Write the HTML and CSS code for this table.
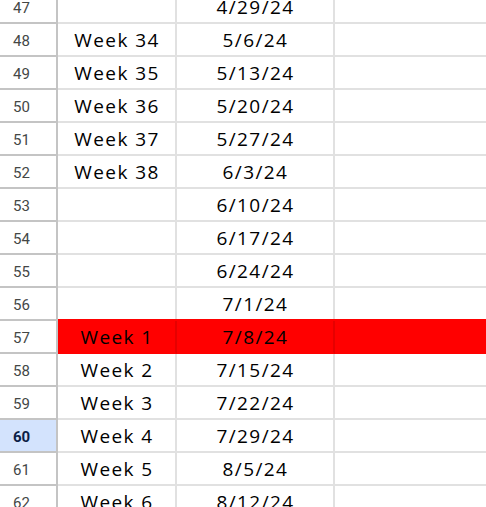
FILE: index.html
```html
<!DOCTYPE html>
<html>
<head>
<meta charset="utf-8">
<link rel="stylesheet" href="styles.css">
</head>
<body>
<div class="sheet">
  <div class="rh">47</div><div class="c b"></div><div class="c d">4/29/24</div><div class="c e"></div>
  <div class="rh">48</div><div class="c b">Week 34</div><div class="c d">5/6/24</div><div class="c e"></div>
  <div class="rh">49</div><div class="c b">Week 35</div><div class="c d">5/13/24</div><div class="c e"></div>
  <div class="rh">50</div><div class="c b">Week 36</div><div class="c d">5/20/24</div><div class="c e"></div>
  <div class="rh">51</div><div class="c b">Week 37</div><div class="c d">5/27/24</div><div class="c e"></div>
  <div class="rh">52</div><div class="c b">Week 38</div><div class="c d">6/3/24</div><div class="c e"></div>
  <div class="rh">53</div><div class="c b"></div><div class="c d">6/10/24</div><div class="c e"></div>
  <div class="rh">54</div><div class="c b"></div><div class="c d">6/17/24</div><div class="c e"></div>
  <div class="rh">55</div><div class="c b"></div><div class="c d">6/24/24</div><div class="c e"></div>
  <div class="rh">56</div><div class="c b"></div><div class="c d">7/1/24</div><div class="c e"></div>
  <div class="rh">57</div><div class="c b red">Week 1</div><div class="c d red">7/8/24</div><div class="c e red"></div>
  <div class="rh">58</div><div class="c b">Week 2</div><div class="c d">7/15/24</div><div class="c e"></div>
  <div class="rh">59</div><div class="c b">Week 3</div><div class="c d">7/22/24</div><div class="c e"></div>
  <div class="rh sel">60</div><div class="c b">Week 4</div><div class="c d">7/29/24</div><div class="c e"></div>
  <div class="rh">61</div><div class="c b">Week 5</div><div class="c d">8/5/24</div><div class="c e"></div>
  <div class="rh">62</div><div class="c b">Week 6</div><div class="c d">8/12/24</div><div class="c e"></div>
</div>
</body>
</html>
```

FILE: styles.css
```css
html, body {
  margin: 0;
  padding: 0;
  background: #ffffff;
  overflow: hidden;
}
.sheet {
  display: grid;
  grid-template-columns: 58px 119px 158px 1fr;
  grid-auto-rows: 33px;
  margin-top: -9px;
  width: 486px;
}
.rh {
  box-sizing: border-box;
  border-right: 2px solid #c4c4c4;
  border-bottom: 2px solid #c4c4c4;
  font-family: Roboto, "Liberation Sans", sans-serif;
  font-size: 15px;
  color: #444746;
  display: flex;
  align-items: center;
  padding-left: 13px;
  padding-top: 2px;
}
.rh.sel {
  background: #d3e3fd;
  color: #0b1e46;
  font-weight: 700;
}
.c {
  box-sizing: border-box;
  border-right: 2px solid #e1e1e1;
  border-bottom: 2px solid #e1e1e1;
  font-family: "Open Sans", sans-serif;
  font-size: 19px;
  font-weight: 400;
  letter-spacing: 1.4px;
  color: #000000;
  display: flex;
  align-items: center;
  justify-content: center;
  white-space: nowrap;
  padding-left: 1px;
  padding-top: 1px;
}
.c.e {
  border-right: none;
}
.c.red {
  background: #ff0000;
  border-right-color: #e60000;
  border-bottom-color: #ff0000;
  box-shadow: 0 -2px 0 #ff0000;
}
```
